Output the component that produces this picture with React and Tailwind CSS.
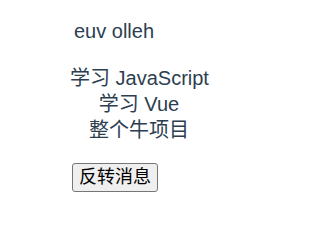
export default function App() {
  return (
    <div
      className="w-[256px] h-[239px] bg-white text-[#2c3e50] pl-[70px] pt-[20px]"
      style={{ fontFamily: '"Liberation Sans", Arial, "Noto Sans CJK SC", sans-serif' }}
    >
      <div className="text-[20px] leading-[23px] pl-[4px]">euv olleh</div>
      <ul className="w-[138px] text-center text-[20px] leading-[26px] mt-[22px] whitespace-nowrap">
        <li>学习 JavaScript</li>
        <li>学习 Vue</li>
        <li>整个牛项目</li>
      </ul>
      <div className="mt-[20px] pl-[2px]">
        <button className="border border-[#767676] rounded-[3px] bg-[#efefef] px-[6px] py-[1px] text-[18px] leading-[25px] text-black">
          反转消息
        </button>
      </div>
    </div>
  );
}
